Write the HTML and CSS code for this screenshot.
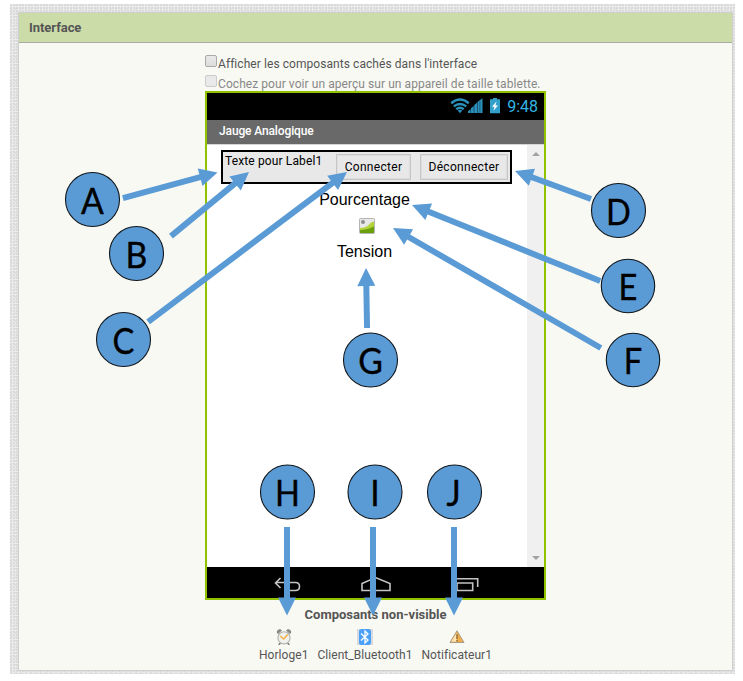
FILE: index.html
```html
<!DOCTYPE html>
<html lang="fr">
<head>
<meta charset="utf-8">
<title>Interface</title>
<link rel="stylesheet" href="styles.css">
</head>
<body>
<main class="backdrop">
  <section class="panel">
    <h1 class="panel-title">Interface</h1>
    <div class="workspace">
      <label class="option"><span class="box"></span><span class="t-show">Afficher les composants cachés dans l'interface</span></label>
      <label class="option disabled"><span class="box"></span><span class="t-tablet">Cochez pour voir un aperçu sur un appareil de taille tablette.</span></label>
      <div class="phone">
        <div class="status">
          <svg class="signals" width="54" height="16" viewBox="0 0 54 16">
            <g fill="none" stroke="#2b91bb" stroke-width="2.4">
              <path d="M1.2 5.2Q10 -2 18.8 5.2"/>
              <path d="M3.8 8.4Q10 3.4 16.2 8.4"/>
              <path d="M6.3 11.3Q10 8.3 13.7 11.3"/>
            </g>
            <path fill="#2b91bb" d="M7.8 12.6Q10 11 12.2 12.6L10 15.2Z"/>
            <path fill="#2b91bb" d="M18 15V13.3L20.6 11V15ZM21 15V10.2L23.8 7.9V15ZM24.2 15V7.1L27 4.8V15ZM27.4 15V4L32.5 .3V15Z"/>
            <path stroke="#145470" stroke-width=".8" d="M29.9 3V15"/>
            <path fill="#33a0cc" d="M40 1.3H43V0H47V1.3H50V15.3H40Z"/>
            <path fill="#fff" d="M46.5 3.5L42 8.8H44.5L43.4 12.8L48 7.4H45.4Z"/>
          </svg>
          <span class="clock">9:48</span>
        </div>
        <div class="app-title"><span>Jauge Analogique</span></div>
        <div class="screen">
          <div class="canvas">
            <div class="arrangement">
              <span class="label">Texte pour Label1</span>
              <span class="button connect">Connecter</span>
              <span class="button disconnect">Déconnecter</span>
            </div>
            <div class="big percent">Pourcentage</div>
            <svg class="image" width="16" height="16" viewBox="0 0 16 16">
              <rect x=".5" y=".5" width="15" height="15" rx="1" fill="#e8e8e8" stroke="#b5b5b5"/>
              <circle cx="4" cy="4" r="2" fill="#8c8c8c"/>
              <path fill="#b4d33a" d="M1 10Q7 10 9.5 7Q12 3.7 15 3.5V15H1Z"/>
              <path fill="#69a00c" d="M1 12.2Q8 12.3 15 8.5V15H1Z"/>
            </svg>
            <div class="big tension">Tension</div>
          </div>
          <div class="scroll"><i class="up"></i><i class="down"></i></div>
        </div>
        <div class="nav">
          <svg width="337" height="31" viewBox="0 0 337 31" fill="none" stroke="#c4c4c4" stroke-width="1.6">
            <path d="M73.5 11L68.5 16L73.5 21M69 15.5H88.5Q92.5 15.5 92.5 19.5Q92.5 23.5 88.5 23.5H79"/>
            <path d="M155 23.5V16.5L168.5 10.5L183 16.5V23.5Z"/>
            <path d="M250 11.7H270.7V20M250 16H265.7V23.5H250Z"/>
          </svg>
        </div>
      </div>
      <div class="hidden-title">Composants non-visible</div>
      <div class="components">
        <div class="component">
          <svg width="16" height="16" viewBox="0 0 16 16">
            <path fill="#888" d="M1 4Q0 1 4 0L6 1.5L2 5ZM15 4Q16 1 12 0L10 1.5L14 5ZM3 14L2 16H4L5 14ZM13 14L14 16H12L11 14Z"/>
            <circle cx="8" cy="8.8" r="6.1" fill="#f1f1ed" stroke="#b0b0ac" stroke-width="1.1"/>
            <path fill="none" stroke="#f5b04c" stroke-width="1.6" d="M4.3 7.2L7.8 10L11.7 5.5"/>
          </svg>
          <span>Horloge1</span>
        </div>
        <div class="component">
          <svg width="16" height="16" viewBox="0 0 16 16">
            <path fill="#d7dade" d="M0 0H16V16H0Z"/>
            <rect x="2" width="12" height="16" rx="2.5" fill="#4ba0f8"/>
            <path fill="none" stroke="#fff" stroke-width="1.3" d="M4 4.5L11 11L8 14V2L11 5L4 11.5"/>
          </svg>
          <span>Client_Bluetooth1</span>
        </div>
        <div class="component">
          <svg width="16" height="16" viewBox="0 0 16 16">
            <path fill="#f0ad4a" stroke="#a89c88" d="M8 1.8L15 13.5H1Z" stroke-linejoin="round"/>
            <path fill="#ffe5b4" d="M7.5 4V12.8H2.3Z"/>
            <path stroke="#7d6238" stroke-width="1.2" d="M8 5.3V10M8 11V12.4"/>
          </svg>
          <span>Notificateur1</span>
        </div>
      </div>
    </div>
  </section>
</main>
<svg class="callouts" width="743" height="681" viewBox="0 0 743 681">
  <g class="arrows">
    <path transform="translate(217.5 172.5) rotate(-15.1)" d="M0 0L-18-9V-3H-98V3H-18V9Z"/>
    <path transform="translate(249 172) rotate(-39.4)" d="M0 0L-18-9V-3H-101V3H-18V9Z"/>
    <path transform="translate(347 172) rotate(-37)" d="M0 0L-18-9V-3H-249V3H-18V9Z"/>
    <path transform="translate(515 171) rotate(200.2)" d="M0 0L-18-9V-3H-81V3H-18V9Z"/>
    <path transform="translate(412 205) rotate(202)" d="M0 0L-18-9V-3H-203V3H-18V9Z"/>
    <path transform="translate(393 228) rotate(210)" d="M0 0L-18-9V-3H-240V3H-18V9Z"/>
    <path transform="translate(366 268) rotate(-91)" d="M0 0L-18-9V-3H-60V3H-18V9Z"/>
    <path transform="translate(287 615.5) rotate(90)" d="M0 0L-18-9V-3H-88.5V3H-18V9Z"/>
    <path transform="translate(373 615.5) rotate(90)" d="M0 0L-18-9V-3H-88.5V3H-18V9Z"/>
    <path transform="translate(454 615.5) rotate(90)" d="M0 0L-18-9V-3H-88.5V3H-18V9Z"/>
  </g>
  <g class="nodes">
    <g transform="translate(92.5 199.5)"><circle r="27"/><text y="14" transform="scale(.9 1)">A</text></g>
    <g transform="translate(136.5 253.5)"><circle r="27"/><text y="14" transform="scale(.9 1)">B</text></g>
    <g transform="translate(123.5 339.5)"><circle r="27"/><text y="14" transform="scale(.87 1)">C</text></g>
    <g transform="translate(618.5 210.5)"><circle r="27"/><text y="14" transform="scale(.87 1)">D</text></g>
    <g transform="translate(628 286)"><circle r="26.7"/><text y="14" transform="scale(.87 1)">E</text></g>
    <g transform="translate(633 360)"><circle r="26.7"/><text y="14" transform="scale(.87 1)">F</text></g>
    <g transform="translate(370.5 360)"><circle r="27"/><text y="14" transform="scale(.9 1)">G</text></g>
    <g transform="translate(287.5 492)"><circle r="27"/><text y="14" transform="scale(.87 1)">H</text></g>
    <g transform="translate(375 492)"><circle r="27"/><text y="14" transform="scale(.9 1)">I</text></g>
    <g transform="translate(453.5 492)"><circle cx="1" r="27"/><text y="14" transform="scale(.9 1)">J</text></g>
  </g>
</svg>
</body>
</html>
```
FILE: styles.css
```css
* { box-sizing: border-box; }
body {
  margin: 0;
  width: 743px;
  height: 681px;
  overflow: hidden;
  background: #fff;
  color: #555;
  font: 12px/16px Roboto, sans-serif;
}
svg { display: block; flex: none; }
.backdrop {
  margin: 4px 8px 0 10px;
  height: 670px;
  padding: 8px 2px 3px 8px;
  background-color: #ebebeb;
  background-image:
    radial-gradient(circle at 1px 1px, #dadada 0.8px, transparent 1px),
    radial-gradient(circle at 1px 1px, #e0e0e0 0.8px, transparent 1px);
  background-size: 3px 3px, 5px 4px;
}
.panel {
  height: 659px;
  border: 1px solid #cfcfcf;
  background: #f8f9f3;
}
.panel-title {
  height: 30px;
  margin: 0;
  padding-left: 10px;
  border-bottom: 1px solid #aaaca5;
  background: #ccdca9;
  font-size: 13px;
  line-height: 29px;
  font-weight: 700;
  letter-spacing: -0.05px;
}
.workspace { padding: 10px 0 0 186px; }
.option { display: flex; height: 20px; padding-top: 2px; white-space: nowrap; letter-spacing: 0.065px; }
.option span:last-child { padding-top: 1px; }
.box {
  width: 12px;
  height: 12px;
  margin-right: 1px;
  border: 1px solid #aaa;
  border-radius: 2px;
  background: linear-gradient(#e9e9e9, #dcdcdc);
}
.disabled { height: 18px; color: #888; }
.disabled .box { border-color: #ccc; background: #e9e9e9; }
.phone {
  width: 341px;
  height: 509px;
  border: 2px solid #90c200;
  background: #fff;
}
.status {
  display: flex;
  height: 27px;
  padding: 5px 6px 0 0;
  justify-content: flex-end;
  background: #000;
}
.clock { margin-left: 3px; color: #33b5e5; font-size: 16px; line-height: 17px; }
.app-title {
  height: 25px;
  padding-left: 12px;
  border-bottom: 1px solid #d6d6d6;
  background: #696969;
  color: #fff;
  font-weight: 500;
  line-height: 22px;
  letter-spacing: -0.13px;
}
.screen { display: flex; height: 422px; }
.canvas {
  display: flex;
  width: 320px;
  flex-direction: column;
  align-items: center;
  padding-top: 5px;
}
.arrangement {
  display: flex;
  width: 291px;
  height: 34px;
  margin-right: 1px;
  padding: 2px;
  border: 2px solid #000;
  background: #e8e8e8;
  color: #000;
  letter-spacing: 0.13px;
}
.label { width: 111px; line-height: 15px; white-space: nowrap; }
.button {
  height: 26px;
  border: 1px solid #c6c6c6;
  box-shadow: inset 0 0 0 1px #dedede;
  line-height: 25px;
  text-align: center;
  letter-spacing: 0.3px;
}
.connect { width: 75px; }
.disconnect { width: 88px; margin-left: 9px; }
.big { color: #000; font: 16px/18px "Liberation Sans", sans-serif; }
.percent { margin: 7px 5px 9px 0; }
.image { margin-bottom: 9px; }
.tension { margin-right: 5px; }
.scroll {
  display: flex;
  width: 17px;
  flex-direction: column;
  justify-content: space-between;
  align-items: center;
  padding: 7px 0;
  background: #f0f0f0;
}
.scroll i { border: solid transparent; border-width: 0 4px; }
.scroll .up { border-bottom: 4px solid #a3a3a3; }
.scroll .down { border-top: 4px solid #a3a3a3; }
.nav { height: 31px; background: #000; }
.hidden-title {
  width: 341px;
  height: 29px;
  padding-top: 7px;
  font-size: 13px;
  font-weight: 700;
  text-align: center;
}
.components { display: flex; width: 341px; justify-content: center; gap: 9px; letter-spacing: 0.05px; }
.component { display: flex; flex-direction: column; align-items: center; gap: 2px; }
.callouts { position: absolute; top: 0; left: 0; }
.arrows { fill: #5b9bd5; }
.nodes circle { fill: #5b9bd5; stroke: #10161c; stroke-width: 1.1; }
.nodes text {
  fill: #000;
  stroke: #000;
  stroke-width: 0.4;
  font: 37.5px Lato, sans-serif;
  text-anchor: middle;
}
```
